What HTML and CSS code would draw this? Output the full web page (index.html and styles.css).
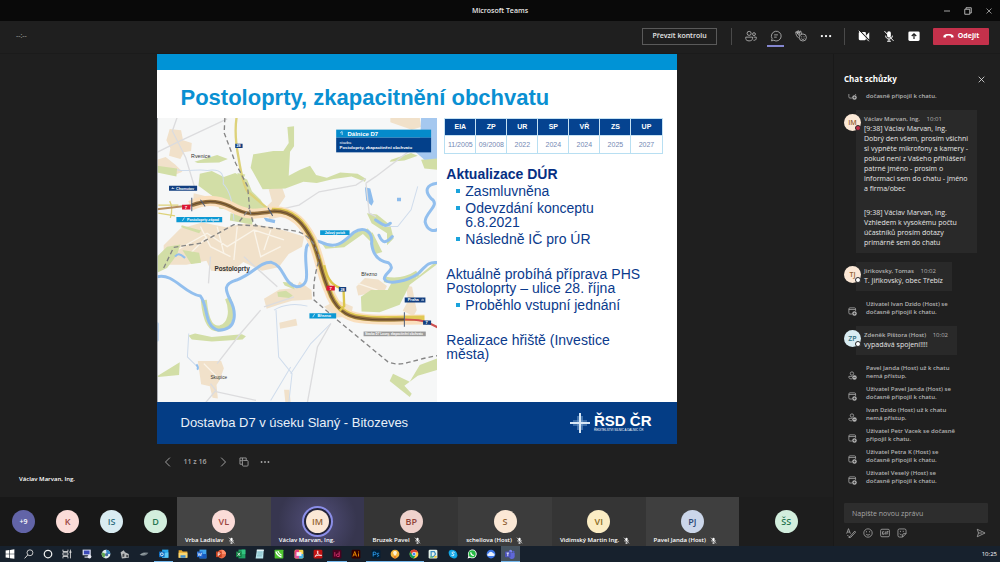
FILE: index.html
```html
<!DOCTYPE html>
<html lang="cs">
<head>
<meta charset="utf-8">
<title>Microsoft Teams</title>
<link rel="stylesheet" href="styles.css">
</head>
<body>
<svg class="defs" aria-hidden="true">
  <symbol id="mic-off" viewBox="0 0 16 16"><rect x="5.500" y="1.500" width="5" height="8.500" rx="2.500" fill="currentColor"/><path d="M3.500 7.500c0 6 9 6 9 0M8 12v3M5.500 15h5M2 1.500l12 13" fill="none" stroke="currentColor" stroke-width="1.300"/></symbol>
  <symbol id="close" viewBox="0 0 16 16"><path d="M3 3l10 10M13 3L3 13" stroke="currentColor" stroke-width="1.400"/></symbol>
  <symbol id="dots" viewBox="0 0 16 16"><g fill="currentColor"><circle cx="2.500" cy="8" r="1.500"/><circle cx="8" cy="8" r="1.500"/><circle cx="13.500" cy="8" r="1.500"/></g></symbol>
  <symbol id="cal-add" viewBox="0 0 16 16"><path d="M7 12.500H3.500a2 2 0 0 1-2-2v-7a2 2 0 0 1 2-2h8a2 2 0 0 1 2 2V7M1.500 4.500h12" fill="none" stroke="currentColor" stroke-width="1.300"/><circle cx="11.500" cy="11.500" r="4" fill="currentColor"/><path d="M11.500 9.500v4M9.500 11.500h4" stroke="#1f1f1f"/></symbol>
  <symbol id="user-out" viewBox="0 0 16 16"><circle cx="7" cy="4.500" r="3" fill="none" stroke="currentColor" stroke-width="1.300"/><path d="M7 14C2 14 1 12 1.500 9.500h6" fill="none" stroke="currentColor" stroke-width="1.300"/><circle cx="11.500" cy="11.500" r="4" fill="currentColor"/><path d="M9.500 11.500h4" stroke="#1f1f1f"/></symbol>
</svg>

<header class="titlebar">
  <span></span>
  <h1 class="titlebar-name">Microsoft Teams</h1>
  <div class="window-buttons">
    <button aria-label="Minimalizovat"><svg viewBox="0 0 16 16"><path d="M2 8h12" stroke="currentColor" stroke-width="1.600"/></svg></button>
    <button aria-label="Obnovit"><svg viewBox="0 0 16 16"><path d="M1.500 4.500h10v10h-10zM4 4V1.500h10.500V12H12" fill="none" stroke="currentColor" stroke-width="1.700"/></svg></button>
    <button aria-label="Zavřít"><svg><use href="#close"/></svg></button>
  </div>
</header>

<div class="toolbar">
  <span class="timer">--:--</span>
  <button class="control-button">Převzít kontrolu</button>
  <span class="divider"></span>
  <button class="tool" aria-label="Účastníci"><svg viewBox="0 0 16 16" fill="none" stroke="currentColor" stroke-width="1.100"><circle cx="5.500" cy="4.500" r="2.700"/><circle cx="12" cy="5.500" r="1.900"/><path d="M1 9.500h9v2c0 4-9 4-9 0zM11.500 9.500H15v1.500c0 2-1.500 3-3.700 2.700"/></svg></button>
  <button class="tool tool-active" aria-label="Chat"><svg viewBox="0 0 16 16" fill="none" stroke="currentColor" stroke-width="1.100"><path d="M2 14.500l.8-3A6.500 6.500 0 1 1 5 13.700zM5.500 6.500h5M5.500 9.500h3.500"/></svg></button>
  <button class="tool" aria-label="Reakce"><svg viewBox="0 0 16 16" fill="none" stroke="currentColor" stroke-width="1.100"><path d="M5 10.500C2 9 1.200 6 1 2.500l1.500-.3L3.500 5V1.200L5 1l1 3.500L6.500 1.500 8 1.700v3L9.500 4"/><path d="M2 3l4 5M4 1.500l2 5"/><circle cx="10.500" cy="10" r="4.700"/><path d="M8.500 11.500c1 1.500 3 1.500 4 0"/><path d="M8.800 8.500v1M12 8.500v1" stroke-width="1.400"/></svg></button>
  <button class="tool tool-strong" aria-label="Další akce"><svg><use href="#dots"/></svg></button>
  <span class="divider"></span>
  <button class="tool tool-strong" aria-label="Zapnout kameru"><svg viewBox="0 0 16 16"><rect x="1" y="2.500" width="9.500" height="11" rx="1.500" fill="currentColor"/><path d="M11 7l4-4v10L11 9z" fill="currentColor"/><path d="M2 0.500l14 15" stroke="#1f1f1f" stroke-width="1.500"/><path d="M1 1l13.500 14" stroke="currentColor" stroke-width="1.200"/></svg></button>
  <button class="tool tool-strong" aria-label="Zapnout mikrofon"><svg><use href="#mic-off"/></svg></button>
  <button class="tool tool-strong" aria-label="Sdílet obsah"><svg viewBox="0 0 16 16"><rect x="0.500" y="2" width="15" height="12.500" rx="1.800" fill="currentColor"/><path d="M8 12V5.500M5 8l3-3 3 3" fill="none" stroke="#1f1f1f" stroke-width="1.600"/></svg></button>
  <button class="leave"><svg viewBox="0 0 16 8"><path d="M.8 6.300C-.5 2 4 1 8 1s8.500 1 7.200 5.300L11.500 6V4c-2-1-5-1-7 0v2z" fill="currentColor"/></svg>Odejít</button>
</div>

<div class="workspace">
  <main class="stage">
    <article class="slide">
      <div class="slide-stripe"></div>
      <h2 class="slide-title">Postoloprty, zkapacitnění obchvatu</h2>
      <div class="slide-body">
        <svg class="map" viewBox="0 24 840 852" preserveAspectRatio="xMidYMid slice" role="img" aria-label="Mapa obchvatu Postoloprty">
          <rect y="24" width="840" height="852" fill="#f6f7f7"/>
          <g fill="#f1e1ca">
            <path d="M698 24h88l4 28-28 8-64-22zM38 58l34 4 6 30 26 8-2 24-22 4-10 20-34-10 4-22-12-24zM0 150l26-8 30 24 20 20-20 8-56-16zM334 238l40-6 10 28-20 30 14 30-42 8-12-34 20-20zM110 250l40 10 10 20-30 8-22-14z"/>
            <path d="M20 406l50-50 66-18 70 14 60-12 90 14 84 26-6 30-40 22-30 40-50 10-56-26-36 30-60-4-14-30-60 12-68 0z"/>
            <path d="M320 566l46-28 50-4 10-20 36 26 2 28-60 4-40 12-36 12zM500 590l40-20 46 20-6 30-44 2zM596 530l26-26 40 4 26 20-12 24-40-2-34 6zM745 526l18 4 14 70-10 18-32-16 16-30zM366 638l50-12 4 20-52 10zM122 752l70 0 8 22-12 34-10 16 4 40-16-2-8-34-26-6zM380 838h16l4 38h-16z"/>
          </g>
          <g fill="none" stroke="#faf4e9" stroke-width="4"><path d="M60 420l90-50 60 40 80-50 90 30M130 350l30 60 60 30M240 350l-10 100M290 360l20 80 60-30M90 440l60-60M180 350l20 80M340 360l-20 60M600 520l60 20M140 760l40 40"/></g>
          <g fill="#d2dea6">
            <path d="M390 52l20-2 0 60-12 16-4 72 34-18 30-12 18 28 32 8 40-16 52 4 26 16-4 8-40-16-54 8-50 12-40-4-54 20-68 2-36-64 8-40 60-10 30 0 16-24z"/>
            <path d="M128 192l36-8 36 18 34-12 36 20 14 34 26 26 20 34-24 10-70-12-50-6-10-30-52-38zM112 156l68-20 32 12-26 10-64 2zM0 168l60 8-2 24-58-12zM240 190l24 4-10 24zM74 346l58 16-6 8-54-18zM220 310l70 14-6 20-66-12zM700 150l60-20 20 8-40 14-44 4zM790 150l50-6v36l-40-4z"/>
            <path d="M490 396l40 16 50-40 50-16 20 20-6 24-28-28-56 40-56 4zM628 310l30 4 40 32 10 40-20 20 0-36-46-30zM0 440l30-30 40-6-10 30-30 40-30 14zM76 420l50 8 6 30-30 4zM610 560l30-20 50 0 16-30 70-6 60-50v10l-80 60-30 60-60 22-54-2zM644 366l30 60-20 6-16-30zM94 676l20-6 50 10 90-8 12 6-10 10-92 6-60-6zM0 798l68-42-2 38-62 6zM696 812l10-22 50 24 30-50 54-20v34l-60 18-40 30 22 24-6 10z"/>
            <path d="M360 546l26-4 20 14-10 8-34-4zM376 516l30 2 6 20-30-12z"/>
          </g>
          <path d="M790 24h50v122l-40 4-26-22 14-50z" fill="#a5c8ef"/>
          <path d="M622 232l16 4 10 40-6 12-16-16zM318 322l36 8-2 10-26-6zM718 264h12v10h-12z" fill="#8dbcec"/>
          <g fill="none" stroke="#cfdcec" stroke-width="3">
            <path d="M60 180c30 8 60-4 90 2 50-8 50 20 48 40 20 20 30 60 32 110M95 670l-4 70 30 30M350 600c30-20 70-20 100-12M356 600l8 140 40 50-10 90M400 790l60-90 60-60M780 230l-20 70-40 50-44 0M340 870l60-100"/>
          </g>
          <g fill="none" stroke="#dcdcde" stroke-width="4">
            <path d="M0 128l60-30 150-70M60 24l-14 40 40 80 30 100M625 206l-30 20-110 20-60 40-80 18M625 220l30-20 110-84M625 220l10 90 20 10M260 440l100 90M310 600l-60 70-70 90M320 590l90-30M520 640l-40 70-30 166M160 440l-6 80M160 820l16 20-30 36M176 844l120 26"/>
          </g>
          <path d="M140 570c6 70 24 90 50 84 30-8 40-50 22-90M780 490c-40 26-80 22-100 18" fill="none" stroke="#d2dea6" stroke-width="18"/>
          <path d="M0 500c50-12 80 50 130 58 24 30 10 92 54 102 60 0 52-60 34-92-14-30-20-46 20-58 54-20 66-54 104-53 40 10 36 66 76 73 50-2 20-60 28-110 0-20 20-32 42-24 50 24 70 0 100-28 34-22 58 0 54 32 4 40 26 54 50 58 26 20-12 30-12 48 8 20 70 8 102-16 22-22 30-36 58-32M840 220c-36 4-40 24-20 46 30 20-18 40-18 70 6 26 26 30 38 22M654 330c30 20 30 20 44 10M664 376c10 24 20 26 40 4M0 640v50" fill="none" stroke="#92bfee" stroke-width="9" stroke-linecap="round"/>
          <path d="M118 762c6 8 4 14 2 16M54 440c10-14 20-4 30 4" stroke="#92bfee" stroke-width="6" fill="none"/>
          <g fill="none" stroke="#ddd27a" stroke-width="7"><path d="M238 24c-6 40-2 80 6 120 8 50 14 80 26 100l70 60"/><path d="M38 274c8 14 8 30 2 50M4 286h60M4 310l50 8" stroke-width="4"/></g>
          <g fill="none">
            <path d="M100 288c40-20 80-20 120 2 50 28 70 24 130 14 60 0 90 40 114 86 22 50 30 110 50 150 16 50 50 80 96 84 50 8 90 4 190 4" stroke="#fadfbd" stroke-width="30"/>
            <path d="M344 302c60-4 94 34 120 86 22 50 30 110 50 150 16 50 50 80 96 84 50 8 90 2 190 2" stroke="#e0c954" stroke-width="16"/>
            <path d="M0 298l104-12" stroke="#b58e60" stroke-width="6"/>
            <path d="M104 286c36-14 76-16 116 4 50 28 70 24 130 14 60 0 90 40 114 86 22 50 30 110 50 150 16 50 50 80 96 84 50 8 90 4 130 4" stroke="#94713f" stroke-width="11"/>
            <path d="M104 286c36-14 76-16 116 4 50 28 70 24 130 14 60 0 90 40 114 86 22 50 30 110 50 150 16 50 50 80 96 84 50 8 90 4 130 4" stroke="#634a2e" stroke-width="3"/>
            <path d="M500 466c10 50 30 62 58 72l2 50-14 14" stroke="#dcc64c" stroke-width="7"/>
            <path d="M740 628c40 0 70 4 100 24" stroke="#cd5150" stroke-width="6"/>
          </g>
          <path d="M203 24l-2 46 34 90 36 70 6 64-34 46M277 300l10 36 12 12M20 474l30-62 80-12 100-56 70 4 120 16c40 16 54 40 66 80-14 50-20 80-16 126l70 60 150 124c40 20 80-8 150-18" fill="none" stroke="#858585" stroke-width="4" stroke-dasharray="14 9"/>
          <path d="M104 264v40M740 606v44M332 294l14 24M130 270l14 20" stroke="#4d5e78" stroke-width="3"/>
          <rect x="536" y="60" width="284" height="24" fill="#058bcb"/><rect x="536" y="84" width="284" height="44" fill="#03408a"/>
          <path d="M36 228h84v15H36zM234 102h22v13h-22zM544 531h22v13h-22zM741 562h62v15h-62zM796 631h24v13h-24z" fill="#123f80"/>
          <path d="M58 321h137v16H58zM488 361h88v14h-88zM456 609h80v16h-80z" fill="#0c99d4"/>
          <path d="M75 285h25v14H75zM507 527h25v14h-25z" fill="#dc1734"/>
          <rect x="618" y="664" width="186" height="14" fill="#9a9a9a"/>
          <path d="M554 66v10M548 70l6-5M44 236h8M44 236l4-3M790 570h8M798 570l-4-3M76 333l6-10M466 621l6-10" stroke="#fff" stroke-width="2"/>
          <g class="map-labels">
            <text x="570" y="79" font-size="18">Dálnice D7</text>
            <text x="546" y="102" font-size="12" font-weight="400">stavba</text>
            <text x="546" y="119" font-size="13">Postoloprty, zkapacitnění obchvatu</text>
            <text x="57" y="240" font-size="11">Chomutov</text>
            <text x="90" y="333" font-size="11">Postoloprty-západ</text>
            <text x="502" y="372" font-size="10">Jalový potok</text>
            <text x="480" y="621" font-size="12">Březno</text>
            <text x="750" y="574" font-size="12">Praha</text>
            <text x="622" y="674" font-size="9">Stavba D7 Louny, zkapacitnění obchvatu</text>
            <text x="83" y="297" font-size="13">7</text><text x="516" y="539" font-size="13">7</text>
            <text x="803" y="642" font-size="12">7</text><text x="549" y="542" font-size="11">28</text><text x="238" y="113" font-size="11">28</text>
          </g>
          <g class="map-places">
            <text x="102" y="145" font-size="16">Rvenice</text>
            <text class="map-town" x="172" y="482" font-size="19">Postoloprty</text>
            <text x="611" y="497" font-size="15">Březno</text>
            <text x="160" y="805" font-size="14">Skupice</text>
          </g>
          <path d="M1 24v852" stroke="#9a9da3" stroke-width="3"/>
        </svg>
        <div class="slide-content">
          <table class="phases">
            <thead><tr><th>EIA</th><th>ZP</th><th>UR</th><th>SP</th><th>VŘ</th><th>ZS</th><th>UP</th></tr></thead>
            <tbody><tr><td>11/2005</td><td>09/2008</td><td>2022</td><td>2024</td><td>2024</td><td>2025</td><td>2027</td></tr></tbody>
          </table>
          <div class="notes">
            <section>
              <h3>Aktualizace DÚR</h3>
              <ul><li>Zasmluvněna</li><li>Odevzdání konceptu<br>6.8.2021</li><li>Následně IČ pro ÚR</li></ul>
            </section>
            <section>
              <p>Aktuálně probíhá příprava PHS Postoloprty – ulice 28. října</p>
              <ul><li>Proběhlo vstupní jednání</li></ul>
            </section>
            <section><p>Realizace hřiště (Investice<br>města)</p></section>
          </div>
        </div>
      </div>
      <footer class="slide-footer">
        <p>Dostavba D7 v úseku Slaný - Bitozeves</p>
        <div class="rsd">
          <svg viewBox="0 0 20 20"><path d="M8 3v14M12 3v14M3 8h14M3 12h14" stroke="#6f9ac8" stroke-width="1.200"/><path d="M10 0v20M0 10h20" stroke="#d8e8f6" stroke-width="2"/></svg>
          <div class="rsd-name"><strong>ŘSD ČR</strong><small>ŘEDITELSTVÍ SILNIC A DÁLNIC ČR</small></div>
        </div>
      </footer>
    </article>

    <div class="stage-bar">
      <nav class="pager" aria-label="Snímky">
        <button aria-label="Předchozí"><svg viewBox="0 0 16 16"><path d="M11 1L4 8l7 7" fill="none" stroke="currentColor" stroke-width="1.500"/></svg></button>
        <span class="page-number">11 z 16</span>
        <button aria-label="Další"><svg viewBox="0 0 16 16"><path d="M5 1l7 7-7 7" fill="none" stroke="currentColor" stroke-width="1.500"/></svg></button>
        <button class="pager-grid" aria-label="Přejít na snímek"><svg viewBox="0 0 16 16" fill="none" stroke="currentColor" stroke-width="1.300"><path d="M5.500 11.500h-4v-10h10v4M1.500 6h4M5.500 1.500V6"/><rect x="5.500" y="5.500" width="9" height="9" rx="1.500"/></svg></button>
        <button aria-label="Další možnosti"><svg><use href="#dots"/></svg></button>
      </nav>
      <p class="presenter">Václav Marvan, Ing.</p>
    </div>

    <div class="filmstrip">
      <div class="overflow-people">
        <button class="avatar avatar-more">+9</button>
        <span class="avatar pink">K</span><span class="avatar ice">IS</span><span class="avatar mint">D</span>
      </div>
      <div class="tile shade-a"><span class="avatar pink">VL</span><p>Vrba Ladislav <svg><use href="#mic-off"/></svg></p></div>
      <div class="tile speaking"><span class="avatar cream ring">IM</span><p>Václav Marvan, Ing.</p></div>
      <div class="tile shade-b"><span class="avatar rose">BP</span><p>Bruzek Pavel <svg><use href="#mic-off"/></svg></p></div>
      <div class="tile shade-c"><span class="avatar cream">S</span><p>schellova (Host) <svg><use href="#mic-off"/></svg></p></div>
      <div class="tile shade-b"><span class="avatar lemon">VI</span><p>Vidimský Martin Ing. <svg><use href="#mic-off"/></svg></p></div>
      <div class="tile shade-d"><span class="avatar blue">PJ</span><p>Pavel Janda (Host) <svg><use href="#mic-off"/></svg></p></div>
      <div class="tile"><span class="avatar mint">ŠS</span></div>
    </div>
  </main>

  <aside class="chat">
    <header class="chat-header"><h2>Chat schůzky</h2><button aria-label="Zavřít chat"><svg><use href="#close"/></svg></button></header>
    <div class="chat-log">
      <div class="notice"><svg><use href="#cal-add"/></svg><p>dočasně připojil k chatu.</p></div>
      <div class="message">
        <span class="avatar small cream">IM<i class="presence busy"></i></span>
        <div class="bubble"><h3>Václav Marvan, Ing. <time>10:01</time></h3>
          <p>[9:38] Václav Marvan, Ing.<br>Dobrý den všem, prosím všichni<br>si vypněte mikrofony a kamery -<br>pokud není z Vašeho přihlášení<br>patrné jméno - prosím o<br>informaci sem do chatu - jméno<br>a firma/obec</p>
          <p>[9:38] Václav Marvan, Ing.<br>Vzhledem k vysokému počtu<br>účastníků prosím dotazy<br>primárně sem do chatu</p></div>
      </div>
      <div class="message">
        <span class="avatar small cream">TJ<i class="presence"></i></span>
        <div class="bubble"><h3>Jirikovsky, Tomas <time>10:02</time></h3><p>T. Jiřikovský, obec Třebíz</p></div>
      </div>
      <div class="notice"><svg><use href="#cal-add"/></svg><p>Uživatel Ivan Dzido (Host) se<br>dočasně připojil k chatu.</p></div>
      <div class="message">
        <span class="avatar small ice">ZP<i class="presence"></i></span>
        <div class="bubble"><h3>Zdeněk Pištora (Host) <time>10:02</time></h3><p>vypadává spojení!!!!</p></div>
      </div>
      <div class="notice"><svg><use href="#user-out"/></svg><p>Pavel Janda (Host) už k chatu<br>nemá přístup.</p></div>
      <div class="notice"><svg><use href="#cal-add"/></svg><p>Uživatel Pavel Janda (Host) se<br>dočasně připojil k chatu.</p></div>
      <div class="notice"><svg><use href="#user-out"/></svg><p>Ivan Dzido (Host) už k chatu<br>nemá přístup.</p></div>
      <div class="notice"><svg><use href="#cal-add"/></svg><p>Uživatel Petr Vacek se dočasně<br>připojil k chatu.</p></div>
      <div class="notice"><svg><use href="#cal-add"/></svg><p>Uživatel Petra K (Host) se<br>dočasně připojil k chatu.</p></div>
      <div class="notice"><svg><use href="#cal-add"/></svg><p>Uživatel Veselý (Host) se<br>dočasně připojil k chatu.</p></div>
    </div>
    <form class="compose">
      <input type="text" aria-label="Nová zpráva" placeholder="Napište novou zprávu">
      <div class="compose-tools">
        <button type="button" aria-label="Formát"><svg viewBox="0 0 16 16" fill="none" stroke="currentColor" stroke-width="1.200"><path d="M1 9l3-8 3 8M2 6.500h4M6 14l8-9 1.500 1.500-8 8.500-3 .5zM2 12c2-1 2 2 4 2"/></svg></button>
        <button type="button" aria-label="Emoji"><svg viewBox="0 0 16 16" fill="none" stroke="currentColor" stroke-width="1.200"><circle cx="8" cy="8" r="6.700"/><path d="M5 9.500c1 2.500 5 2.500 6 0M5.500 5v2M10.500 5v2"/></svg></button>
        <button type="button" aria-label="GIF"><svg viewBox="0 0 16 16" fill="none" stroke="currentColor" stroke-width="1.200"><rect x="1" y="2" width="14" height="12" rx="2"/><path d="M6.500 6H4v4h2.500V8M8.500 5.500v5M11 10.500v-5h2.500M11 8h2"/></svg></button>
        <button type="button" aria-label="Nálepka"><svg viewBox="0 0 16 16" fill="none" stroke="currentColor" stroke-width="1.200"><path d="M9 14.500H4a2.500 2.500 0 0 1-2.500-2.500V4A2.500 2.500 0 0 1 4 1.500h8A2.500 2.500 0 0 1 14.500 4v5zM9 14.500V11a2 2 0 0 1 2-2h3.500M4.500 9c.5 1.500 1.500 2 3 2M5.500 4.500v2M10 4.500v2"/></svg></button>
        <button class="send" type="button" aria-label="Odeslat"><svg viewBox="0 0 16 16" fill="none" stroke="currentColor" stroke-width="1.200"><path d="M2 2l12.500 6L2 14l2-6zM4 8h6"/></svg></button>
      </div>
    </form>
  </aside>
</div>

<footer class="taskbar">
  <nav class="apps" aria-label="Aplikace">
    <button aria-label="Start"><svg viewBox="0 0 16 16"><path d="M1 2.500l6-1v6H1zM8 1.400l7-1v7.100H8zM1 8.500h6v6l-6-1zM8 8.500h7v7.100l-7-1z" fill="#fff"/></svg></button>
    <button aria-label="Hledat"><svg viewBox="0 0 16 16"><circle cx="9.500" cy="6" r="4.700" fill="none" stroke="#ddd" stroke-width="1.400"/><path d="M6 9.500L1 15" stroke="#ddd" stroke-width="1.600"/></svg></button>
    <button aria-label="Cortana"><svg viewBox="0 0 16 16"><circle cx="8" cy="8" r="6" fill="none" stroke="#eee" stroke-width="2"/></svg></button>
    <button aria-label="Zobrazení úloh"><svg viewBox="0 0 16 16" fill="none" stroke="#ddd" stroke-width="1.400"><path d="M1.500 1v3h8V1M1.500 15v-3h8v3M1.500 6h8v4h-8zM13.500 1v14"/><path d="M12 5h3" stroke-width="2.500"/></svg></button>
    <button aria-label="Počítač"><svg viewBox="0 0 16 16"><rect x="1" y="1" width="13" height="9" fill="#d8dcef"/><rect x="3" y="2.500" width="9" height="6" fill="#3b49b8"/><path d="M4 12h6v2H4z" fill="#ccd"/><circle cx="12" cy="12" r="3" fill="#e8eaf4"/></svg></button>
    <button aria-label="Prohlížeč"><svg viewBox="0 0 16 16"><circle cx="8" cy="8" r="7" fill="#dfe9ee"/><path d="M8 1a7 7 0 0 1 7 7H9z" fill="#368ac9"/><path d="M2 5l6 3-3 6A7 7 0 0 1 2 5z" fill="#63a852"/><circle cx="9" cy="9" r="2.500" fill="#476ba5"/></svg></button>
    <button aria-label="Nástroje"><svg viewBox="0 0 16 16"><path d="M1 5l5-3 2 3 6 3v6l-11 1z" fill="#b8babc"/><path d="M4 8l3-1v5l-3 1zM10 9l3 1v3h-3z" fill="#45484c"/></svg></button>
    <button aria-label="Skener"><svg viewBox="0 0 16 16"><path d="M1 9c4-4 9-4 14-3-3 5-9 6-14 3z" fill="#778087"/><path d="M3 9l7-2" stroke="#abb" /></svg></button>
    <button class="open" aria-label="Outlook"><svg viewBox="0 0 16 16"><path d="M5 1h10v13H5z" fill="#28a8ea"/><path d="M5 8l10-3v9H5z" fill="#5dc9f6"/><rect y="4" width="9" height="9" rx="1" fill="#0f6cbd"/><circle cx="4.500" cy="8.500" r="2.300" fill="none" stroke="#fff" stroke-width="1.300"/></svg></button>
    <button aria-label="Průzkumník"><svg viewBox="0 0 16 16"><path d="M1 2h5l1.500 2H15v10H1z" fill="#e7a92e"/><path d="M1 6h14v8H1z" fill="#f8d774"/><path d="M4 10h8v4H4z" fill="#3e8ed0"/></svg></button>
    <button aria-label="Word"><svg viewBox="0 0 16 16"><rect x="4" y="1" width="11" height="14" fill="#41a5ee"/><path d="M4 8h11v7H4z" fill="#185abd"/><rect y="4" width="9" height="9" fill="#2169cf"/><path d="M1.500 6l1.500 5 1.500-4L6 11l1.500-5" stroke="#fff" fill="none"/></svg></button>
    <button aria-label="PowerPoint"><svg viewBox="0 0 16 16"><circle cx="9" cy="8" r="7" fill="#ed6c47"/><path d="M9 1a7 7 0 0 1 7 7H9z" fill="#ff8f6b"/><rect y="4" width="9" height="9" fill="#c43e1c"/><path d="M3.500 11.500V6H5a1.500 1.500 0 0 1 0 3H3.500" stroke="#fff" fill="none" stroke-width="1.200"/></svg></button>
    <button aria-label="Excel"><svg viewBox="0 0 16 16"><rect x="4" y="1" width="11" height="14" fill="#21a366"/><path d="M9 1h6v7H9z" fill="#33c481"/><rect y="4" width="9" height="9" fill="#107c41"/><path d="M2.500 6l4 5M6.500 6l-4 5" stroke="#fff" stroke-width="1.200"/></svg></button>
    <button aria-label="Poznámkový blok"><svg viewBox="0 0 16 16"><path d="M3 1h11l-1 14H1z" fill="#b9e4ec"/><path d="M4 5h8M4 8h8M3 11h8" stroke="#5fa0ab"/><path d="M3 1h11v2H3z" fill="#e8f4f5"/></svg></button>
    <button aria-label="Záznam"><svg viewBox="0 0 16 16"><rect x="1" y="1" width="14" height="14" rx="1" fill="#4ec52f"/><path d="M3 4c1 4 4 7 9 9M6 3c1 3 3 5 6 7" stroke="#fff" stroke-width="2" fill="none"/></svg></button>
    <button aria-label="Galerie"><svg viewBox="0 0 16 16"><rect x="1" y="1" width="14" height="14" rx="2" fill="#f7d44b"/><path d="M3 1h5v7H1V3z" fill="#e8427d"/><path d="M8 8h7v5l-2 2H8z" fill="#49b4e6"/><path d="M1 8h7v7H3l-2-2z" fill="#e0529b"/><path d="M4 5h8v6H4z" fill="#f7eef3"/></svg></button>
    <button aria-label="Acrobat"><svg viewBox="0 0 16 16"><rect x="1" y="1" width="14" height="14" rx="2" fill="#c11313"/><path d="M3 12c4-2 6-9 4.500-9S8 11 13 10.500 6 9 3 12z" fill="none" stroke="#fff" stroke-width="1.200"/></svg></button>
    <button class="open" aria-label="InDesign"><svg viewBox="0 0 16 16"><rect x="1" y="1" width="14" height="14" rx="2" fill="#49021f"/><path d="M4.500 5v7M11.500 4v8H9a2 2 0 0 1 0-4h2" fill="none" stroke="#e83877" stroke-width="1.300"/></svg></button>
    <button aria-label="Illustrator"><svg viewBox="0 0 16 16"><rect x="1" y="1" width="14" height="14" rx="2" fill="#330000"/><path d="M3 12l3-8 3 8M4 9.500h4M12 7v5M12 4v1.500" fill="none" stroke="#ff9a00" stroke-width="1.300"/></svg></button>
    <button class="open" aria-label="Photoshop"><svg viewBox="0 0 16 16"><rect x="1" y="1" width="14" height="14" rx="2" fill="#001e36"/><path d="M3.500 12V5H6a2 2 0 0 1 0 4H3.500M13 7c-4-1-4 2-2 2.300s2 3-1.500 2.200" fill="none" stroke="#31a8ff" stroke-width="1.300"/></svg></button>
    <button class="open" aria-label="Mapy"><svg viewBox="0 0 16 16"><circle cx="8" cy="8" r="7" fill="#f3b53c"/><path d="M8 3c4 0 4 4 0 8-4-4-4-8 0-8z" fill="#fff3d5"/><path d="M6 11h4v4H6z" fill="#ea7e25"/></svg></button>
    <button class="open" aria-label="Chrome"><svg viewBox="0 0 16 16"><circle cx="8" cy="8" r="7" fill="#ffcd40"/><path d="M2 4.500A7 7 0 0 1 14.500 5H8L5 9z" fill="#db4437"/><path d="M1.900 4.500A7 7 0 0 0 7.500 15l3-5.200L5 9.500z" fill="#0f9d58"/><circle cx="8" cy="8" r="3.200" fill="#fff"/><circle cx="8" cy="8" r="2.400" fill="#4285f4"/></svg></button>
    <button aria-label="Disk"><svg viewBox="0 0 16 16"><rect x="1" y="1" width="14" height="14" rx="2" fill="#e5f2ea"/><path d="M5 4h5l2 4-3 4H5z" fill="none" stroke="#3e91c4" stroke-width="2"/><path d="M3 12h5v2H3z" fill="#6bc06f"/><path d="M10 11h4v3h-4z" fill="#edc63a"/></svg></button>
    <button aria-label="Skype"><svg viewBox="0 0 16 16"><circle cx="6" cy="6" r="5" fill="#0a9ddd"/><circle cx="10" cy="10" r="5" fill="#0a9ddd"/><circle cx="8" cy="8" r="6" fill="#1aabe8"/><path d="M10.500 5.500c-3-2-6 1-2.500 2.300S8.500 12 5.500 10" fill="none" stroke="#fff" stroke-width="1.400"/></svg></button>
    <button aria-label="WhatsApp"><svg viewBox="0 0 16 16"><path d="M1 15l1.200-4A7 7 0 1 1 5 14z" fill="#fff"/><circle cx="8.300" cy="7.800" r="5.700" fill="#25b943"/><path d="M6 5c0 3 2 5 5 5.500" stroke="#fff" stroke-width="1.800" fill="none"/></svg></button>
    <button aria-label="Cloud"><svg viewBox="0 0 16 16"><circle cx="8" cy="8" r="7" fill="#3d77e8"/><path d="M4 11a2 2 0 0 1 0-4 4 4 0 0 1 7.500 0 2 2 0 0 1 .5 4z" fill="#e9f1ff"/></svg></button>
    <button class="open current" aria-label="Teams"><svg viewBox="0 0 16 16"><circle cx="9" cy="3.500" r="2.500" fill="#7b83eb"/><circle cx="13.500" cy="4.500" r="1.700" fill="#5059c9"/><path d="M6 6h9.500v5a4.500 4.500 0 0 1-9 1z" fill="#5f67d8"/><rect y="4" width="9" height="9" rx="1" fill="#4b53bc"/><path d="M2.500 6.500h4M4.500 6.500v5" stroke="#fff" stroke-width="1.300"/></svg></button>
  </nav>
  <time class="clock">10:25</time>
</footer>
</body>
</html>
```

FILE: styles.css
```css
* { box-sizing: border-box; margin: 0; padding: 0; }

body {
  display: flex;
  flex-direction: column;
  height: 100vh;
  overflow: hidden;
  background: #1f1f1f;
  color: #e6e6e6;
  font: 7px/10px "Open Sans", "Noto Sans", sans-serif;
}

button {
  display: flex;
  align-items: center;
  justify-content: center;
  border: 0;
  background: none;
  color: inherit;
  font: inherit;
}

svg { display: block; flex: none; width: 10px; height: 10px; }
.defs { position: absolute; width: 0; height: 0; }
ul { list-style: none; }

/* Title bar */
.titlebar {
  display: grid;
  grid-template-columns: 1fr auto 1fr;
  align-items: center;
  flex: none;
  height: 21px;
  background: #090909;
}
.titlebar-name { font-size: 7px; font-weight: 600; }
.window-buttons { display: flex; justify-content: flex-end; padding-right: 1px; color: #ccc; }
.window-buttons button { width: 21px; height: 21px; }
.window-buttons svg { width: 8px; height: 8px; }

/* Meeting toolbar */
.toolbar {
  display: flex;
  align-items: center;
  flex: none;
  height: 33px;
  padding: 0 11px 2px 16px;
  border-bottom: 1px solid #1b1b1b;
}
.timer { flex: 1; color: #aaa; }
.control-button { width: 75px; height: 17px; border: 1px solid #5a5a5a; font-weight: 600; }
.divider { width: 1px; height: 17px; margin: 0 6px; background: #4a4a4a; }
.control-button + .divider { margin-left: 14px; }
.tool { width: 25px; height: 21px; color: #b8b8b8; }
.tool svg { width: 12px; height: 12px; }
.tool.tool-strong { color: #fff; }
.tool-active { background: linear-gradient(#8486cf, #8486cf) center bottom / 17px 2px no-repeat; }
.leave { gap: 4px; width: 56px; height: 17px; margin-left: 7px; border-radius: 1px; background: #c4314b; color: #fff; font-weight: 700; }
.leave svg { width: 11px; height: 6px; }

.workspace { display: flex; flex: 1; min-height: 0; }
.stage { display: flex; flex-direction: column; flex: 1; min-width: 0; }

/* Shared slide */
.slide {
  display: flex;
  flex-direction: column;
  align-self: center;
  flex: 1;
  min-height: 0;
  aspect-ratio: 4 / 3;
  background: #fff;
  color: #0a3a8c;
  font: 14px/14px "Liberation Sans", Arial, sans-serif;
}
.slide-stripe { height: 16px; background: #0093d6; }
.slide-title { padding: 16px 24px 8px; color: #0a90d2; font-size: 22px; line-height: 24px; }
.slide-body { display: flex; flex: 1; min-height: 0; }
.map { width: 54%; height: 100%; }
.map-labels { fill: #fff; font-weight: 700; }
.map-places { fill: #333; }
.map-town { font-weight: 700; }
.slide-content { flex: 1; padding: 0 14px 0 7px; }

.phases { width: 100%; border-collapse: collapse; table-layout: fixed; font-size: 7px; line-height: 8px; }
.phases th { height: 17px; border: 1px solid #c5e2f3; background: #054390; color: #fff; }
.phases td { height: 18px; border: 1px solid #b8dff2; color: #7388b4; text-align: center; }

.notes { display: flex; flex-direction: column; gap: 21px; padding: 13px 0 0 2px; }
.notes section, .notes ul { display: flex; flex-direction: column; gap: 3px; }
.notes h3 { font-size: 14px; line-height: 14px; color: #062f83; }
.notes li {
  padding-left: 19px;
  background: linear-gradient(#1aa3dc, #1aa3dc) 10px 5px / 4px 4px no-repeat;
}

.slide-footer {
  display: flex;
  align-items: center;
  justify-content: space-between;
  height: 42px;
  padding: 0 25px 0 24px;
  background: #043d85;
  color: #e9f0f8;
  font-size: 13px;
}
.rsd { display: flex; align-items: center; gap: 4px; }
.rsd svg { width: 20px; height: 20px; }
.rsd-name { display: flex; flex-direction: column; color: #fff; }
.rsd-name strong { font-size: 15px; line-height: 14px; }
.rsd-name small { font-size: 3px; line-height: 5px; }

/* Slide paging */
.stage-bar { flex: none; height: 53px; }
.pager { display: flex; align-items: center; gap: 10px; padding: 12px 0 0 162px; color: #a8a8a8; }
.pager button { width: 11px; height: 11px; }
.pager svg { width: 10px; height: 10px; }
.page-number { width: 24px; text-align: center; font-weight: 600; }
.presenter { padding: 7px 19px 0; color: #fff; font-size: 6px; font-weight: 600; }

/* Participants */
.filmstrip { display: flex; flex: none; height: 49px; background: #1d1d1d; }
.overflow-people { display: flex; gap: 21px; width: 177px; padding: 13px 0 0 12px; background: #181818; }
.avatar {
  display: flex;
  align-items: center;
  justify-content: center;
  position: relative;
  flex: none;
  width: 23px;
  height: 23px;
  border-radius: 50%;
  font-size: 9px;
  font-weight: 600;
}
.avatar-more { background: #6264a7; color: #fff; font-size: 7px; }
.pink { background: #fbdcd8; color: #9b4340; }
.rose { background: #efd2cc; color: #8f4238; }
.ice { background: #d9ecf2; color: #2f6e80; }
.mint { background: #d2eedd; color: #257350; }
.cream { background: #fbe8d6; color: #946334; }
.lemon { background: #fbedc4; color: #8a6b20; }
.blue { background: #cbd6ea; color: #2d4878; }
.ring { box-shadow: 0 0 0 2px #24243a, 0 0 0 4px #8b8ee8; }

.tile { display: flex; flex-direction: column; align-items: center; flex: 1; min-width: 0; padding-top: 13px; }
.tile p { display: flex; align-items: center; align-self: stretch; gap: 4px; padding: 2px 0 0 8px; color: #fff; font-size: 6px; font-weight: 600; white-space: nowrap; }
.tile svg { width: 7px; height: 7px; }
.shade-a { background: #444; }
.shade-b { background: #353535; }
.shade-c { background: #3c3c3c; }
.shade-d { background: #3f3f3f; }
.speaking { background: radial-gradient(circle, #53507c, #37364f 75%); }

/* Chat */
.chat { display: flex; flex-direction: column; flex: none; width: 167px; padding: 0 12px 0 10px; border-left: 1px solid #191919; }
.chat-header { display: flex; align-items: center; justify-content: space-between; padding: 18px 2px 8px 0; }
.chat-header h2 { color: #fff; font-size: 8px; line-height: 14px; font-weight: 700; }
.chat-header svg { width: 9px; height: 9px; }
.chat-log { display: flex; flex-direction: column; justify-content: flex-end; gap: 5px; flex: 1; min-height: 0; overflow: hidden; padding-bottom: 18px; }
.notice { display: flex; align-items: flex-end; gap: 9px; padding-left: 4px; color: #b4b4b4; font-size: 6px; line-height: 8px; font-weight: 600; }
.notice svg { width: 9px; height: 9px; }
.message { display: flex; align-items: flex-start; margin: 4px 0; }
.notice + .message { margin-top: 5px; }
.message + .message { margin-top: 0; }
.small { z-index: 1; width: 17px; height: 17px; margin: 4px -5px 0 0; font-size: 7px; }
.presence { position: absolute; right: 0; bottom: 0; width: 6px; height: 6px; border: 1px solid #262626; border-radius: 50%; background: #fff; }
.busy { background: #c4314b; }
.bubble { display: flex; flex-direction: column; padding: 4px 9px 5px 8px; background: #292929; white-space: nowrap; }
.bubble h3 { color: #b4b4b4; font-size: 6px; line-height: 10px; font-weight: 600; }
.bubble time { margin-left: 5px; font-weight: 400; }
.bubble p + p { padding-top: 14px; }

.compose input { width: 100%; height: 20px; padding: 0 8px; border: 0; border-radius: 1px; background: #2d2d2d; color: #fff; font: inherit; }
.compose input::placeholder { color: #a6a6a6; opacity: 1; }
.compose-tools { display: flex; align-items: center; gap: 7px; padding: 5px 2px 8px; color: #b0b0b0; }
.send { margin-left: auto; }

/* Taskbar */
.taskbar { display: flex; align-items: center; justify-content: space-between; flex: none; height: 16px; background: #17212d; }
.apps { display: grid; grid-template-columns: repeat(27, 1fr); width: 52%; height: 100%; }
.open { box-shadow: inset 0 -1px #76b9ed; }
.current { background: #46535f; }
.apps svg { width: 10px; height: 10px; }
.clock { padding-right: 3px; color: #fff; font-size: 6px; }
```
